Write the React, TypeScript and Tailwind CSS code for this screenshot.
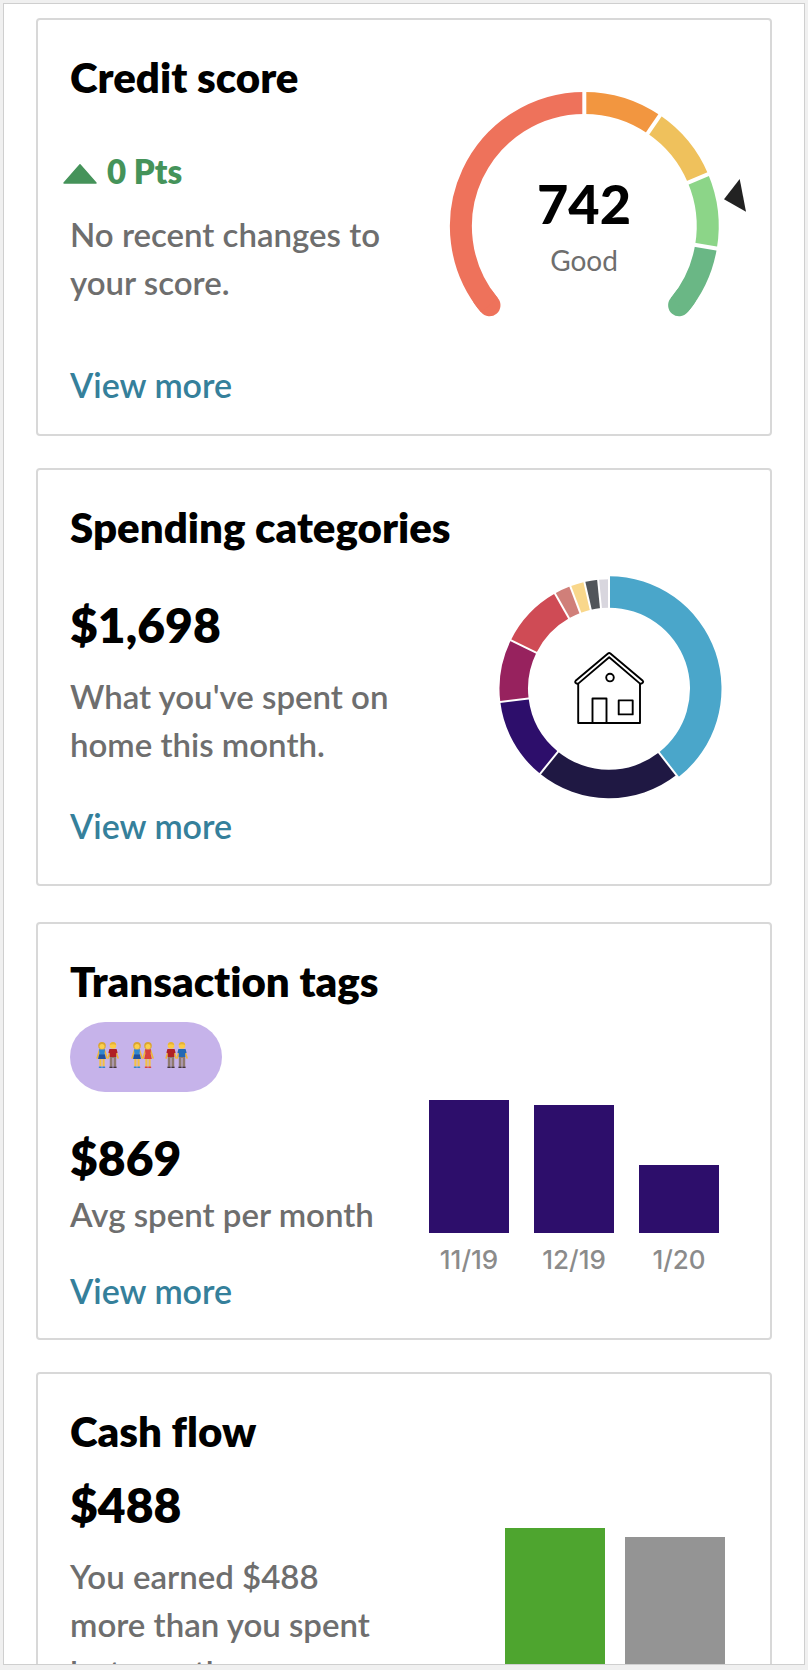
import React from 'react';

type Segment = { from: number; to: number; color: string; outer?: number };

function polar(cx: number, cy: number, r: number, deg: number) {
  const a = (deg * Math.PI) / 180;
  return `${(cx + r * Math.sin(a)).toFixed(2)} ${(cy - r * Math.cos(a)).toFixed(2)}`;
}

function ringPath(cx: number, cy: number, inner: number, outer: number, from: number, to: number) {
  const large = to - from > 180 ? 1 : 0;
  return [
    `M${polar(cx, cy, outer, from)}`,
    `A${outer} ${outer} 0 ${large} 1 ${polar(cx, cy, outer, to)}`,
    `L${polar(cx, cy, inner, to)}`,
    `A${inner} ${inner} 0 ${large} 0 ${polar(cx, cy, inner, from)}Z`,
  ].join('');
}

function arcPath(cx: number, cy: number, r: number, from: number, to: number) {
  const large = to - from > 180 ? 1 : 0;
  return `M${polar(cx, cy, r, from)}A${r} ${r} 0 ${large} 1 ${polar(cx, cy, r, to)}`;
}

const scoreBands: Segment[] = [
  { from: 0, to: 34.3, color: '#f29640' },
  { from: 34.3, to: 67.2, color: '#efc15c' },
  { from: 67.2, to: 99.5, color: '#8cd588' },
];

function ScoreGauge() {
  return (
    <div className="mt-[70px] mr-[50px] grid shrink-0 justify-items-center">
      <svg
        className="h-[228px] w-[272px] overflow-visible [grid-area:1/1]"
        viewBox="0 0 272 228"
        fill="none"
        strokeWidth="22"
        aria-hidden="true"
      >
        <path d={arcPath(136.3, 136.3, 123.4, -129.8, -125)} stroke="#ee725b" strokeLinecap="round" />
        <path d={arcPath(136.3, 136.3, 123.4, -129.8, 0)} stroke="#ee725b" />
        <path d={arcPath(136.3, 136.3, 123.4, 125, 129.8)} stroke="#6ab785" strokeLinecap="round" />
        <path d={arcPath(136.3, 136.3, 123.4, 99.5, 129.8)} stroke="#6ab785" />
        {scoreBands.map((b) => (
          <path key={b.from} d={arcPath(136.3, 136.3, 123.4, b.from, b.to)} stroke={b.color} />
        ))}
        {[0, 34.3, 67.2, 99.5].map((deg) => (
          <path
            key={deg}
            d={`M${polar(136.3, 136.3, 110, deg)}L${polar(136.3, 136.3, 137, deg)}`}
            stroke="#fff"
            strokeWidth="4"
          />
        ))}
        <path d="M291.7 89L276 109.2L298 121.8Z" fill="#222" />
      </svg>
      <div className="flex flex-col items-center pt-[82px] [grid-area:1/1]">
        <span className="text-[54px] leading-[64px] font-black">742</span>
        <span className="mt-[6px] text-[28px] leading-9 text-[#6e6e6e]">Good</span>
      </div>
    </div>
  );
}

const categories: Segment[] = [
  { from: 0, to: 142, color: '#4aa6ca', outer: 112.5 },
  { from: 142, to: 219, color: '#1f1843' },
  { from: 219, to: 263, color: '#2d0e6b' },
  { from: 263, to: 296.3, color: '#97225e' },
  { from: 296.3, to: 330.4, color: '#cf4b55' },
  { from: 330.4, to: 339.3, color: '#d07f79' },
  { from: 339.3, to: 347, color: '#f9d78b' },
  { from: 347, to: 354.3, color: '#51555a' },
  { from: 354.3, to: 360, color: '#d8d6de' },
];

function CategoryDonut() {
  return (
    <svg
      className="mt-[105px] mr-[46px] h-[226px] w-[228px] shrink-0"
      viewBox="0 0 228 226"
      fill="none"
      aria-hidden="true"
    >
      {categories.map((c) => (
        <path
          key={c.from}
          d={ringPath(113, 113.7, 81, c.outer ?? 109.5, c.from, c.to)}
          fill={c.color}
        />
      ))}
      {categories.map((c) => (
        <path
          key={c.from}
          d={`M${polar(113, 113.7, 79, c.from)}L${polar(113, 113.7, 114, c.from)}`}
          stroke="#fff"
          strokeWidth="2"
        />
      ))}
      <g stroke="#000" strokeWidth="1.9" strokeLinejoin="round">
        <path d="M82.2 108.5V148H144V108.5" />
        <path d="M112 78.4Q113.2 77.4 114.4 78.4L146.8 105.8Q147.6 106.6 146.8 107.7Q145.4 109.2 144 108.6L113.2 82.2L82.2 108.6Q80.6 109.2 79.4 107.7Q78.8 106.6 79.6 105.8Z" />
        <circle cx="114" cy="102.6" r="3.8" />
        <path d="M96.5 148V123.5H110.5V148" />
        <rect x="122.7" y="125.4" width="14" height="14" />
      </g>
    </svg>
  );
}

function Person({ x, woman, top }: { x: number; woman?: boolean; top: string }) {
  return (
    <g transform={`translate(${x} 0)`}>
      <path d="M2.6 8L.2 16M7.4 8L10 16" stroke="#eeb63c" strokeWidth="1.7" strokeLinecap="round" />
      {woman ? (
        <>
          <path d="M3.4 16V24.5M6.6 16V24.5" stroke="#f5c142" strokeWidth="2.1" />
          <path d="M2.4 25.2H4.2M5.8 25.2H7.6" stroke={top} strokeWidth="1.4" strokeLinecap="round" />
          <path d="M2 7.2H8L7.6 11.5L8.8 17H1.2L2.4 11.5Z" fill={top} />
          <path d="M2 12.5H8L8.8 17H1.2Z" fill="#1d3f8c" fillOpacity={top === '#d8413c' ? 0 : 0.75} />
          <circle cx="5" cy="3.8" r="3.8" fill="#dba530" />
          <circle cx="5" cy="4.4" r="2.5" fill="#fbd04d" />
        </>
      ) : (
        <>
          <path d="M1.8 13.5H8.2V24.5H5.5V16H4.5V24.5H1.8Z" fill="#8f7a6f" />
          <path d="M2 25.2H4.1M5.9 25.2H8" stroke="#433537" strokeWidth="1.5" strokeLinecap="round" />
          <path d="M1.4 7H8.6L9.6 10.8L8.2 11.2V15H1.8V11.2L.4 10.8Z" fill={top} />
          <circle cx="5" cy="3.5" r="3.3" fill="#fbcb45" />
          <path d="M1.8 3Q2.4 0 5 0Q7.6 0 8.2 3Q5 1.4 1.8 3Z" fill="#e5b137" />
        </>
      )}
    </g>
  );
}

const BLUE = '#2468b4';
const RED = '#b02026';

function TagPill() {
  return (
    <div className="mt-[17px] flex h-[70px] w-[152px] items-start rounded-full bg-[#c6b3ea] pt-5 pl-[27px]">
      <svg
        className="h-[26px] w-[92px] overflow-visible"
        viewBox="0 0 92 26"
        fill="none"
        role="img"
        aria-label="Couples tag"
      >
        <Person x={0} woman top="#2f86cf" />
        <Person x={11} top={RED} />
        <Person x={35} woman top="#2f86cf" />
        <Person x={46} woman top="#d8413c" />
        <Person x={69} top={RED} />
        <Person x={80} top={BLUE} />
      </svg>
    </div>
  );
}

function TagBars() {
  return (
    <div className="mt-[176px] mr-[51px] flex shrink-0 items-end gap-[25px] self-start font-['Inter',sans-serif]">
      <div className="flex w-20 flex-col items-center">
        <div className="h-[133px] w-full bg-[#2d0e6b]" />
        <span className="mt-[11px] text-[26px] leading-8 font-medium text-[#8b8b8b]">11/19</span>
      </div>
      <div className="flex w-20 flex-col items-center">
        <div className="h-32 w-full bg-[#2d0e6b]" />
        <span className="mt-[11px] text-[26px] leading-8 font-medium text-[#8b8b8b]">12/19</span>
      </div>
      <div className="flex w-20 flex-col items-center">
        <div className="h-[68px] w-full bg-[#2d0e6b]" />
        <span className="mt-[11px] text-[26px] leading-8 font-medium text-[#8b8b8b]">1/20</span>
      </div>
    </div>
  );
}

function FlowBars() {
  return (
    <div className="mt-[154px] mr-[45px] flex shrink-0 items-end gap-5 self-start">
      <div className="h-[180px] w-[100px] bg-[#4ea52f]" />
      <div className="h-[171px] w-[100px] bg-[#949494]" />
    </div>
  );
}

function Card({ title, chart, children }: { title: string; chart: React.ReactNode; children: React.ReactNode }) {
  return (
    <section className="flex min-h-[418px] shrink-0 items-start rounded border-2 border-[#d8d8d8] bg-white">
      <div className="flex min-w-0 flex-1 flex-col items-start pt-[33px] pb-5 pl-8">
        <h2 className="text-[42px] leading-12 font-extrabold whitespace-nowrap">{title}</h2>
        {children}
      </div>
      {chart}
    </section>
  );
}

function Amount({ children, className }: { children: React.ReactNode; className: string }) {
  return <p className={`text-5xl leading-14 font-extrabold ${className}`}>{children}</p>;
}

function Note({ children, className }: { children: React.ReactNode; className: string }) {
  return (
    <p className={`max-w-[325px] text-[33px] leading-12 font-semibold text-[#6e6e6e] ${className}`}>{children}</p>
  );
}

function ViewMore({ className }: { className: string }) {
  return (
    <a href="#" className={`text-[34px] leading-12 font-semibold text-[#35809b] ${className}`}>
      View more
    </a>
  );
}

export default function App() {
  return (
    <div className="h-screen bg-[#f0f0f0] p-[3px] pb-[5px] font-['Lato',sans-serif] text-black [font-variant-ligatures:none]">
      <main className="flex h-full flex-col overflow-hidden border border-[#cfcfcf] bg-white px-8 pt-[14px]">
        <Card title="Credit score" chart={<ScoreGauge />}>
          <p className="mt-[46px] -ml-[7px] flex items-center gap-[10px] text-[33px] leading-12 font-extrabold text-[#45935a]">
            <svg className="mt-[5px] h-5 w-[34px]" viewBox="0 0 34 20" aria-hidden="true">
              <path d="M17 .8L33 19H1Z" fill="#45935a" stroke="#45935a" strokeWidth="1.4" strokeLinejoin="round" />
            </svg>
            0 Pts
          </p>
          <Note className="mt-[15px]">No recent changes to your score.</Note>
          <ViewMore className="mt-[55px]" />
        </Card>
        <div className="mt-8 flex flex-col">
          <Card title="Spending categories" chart={<CategoryDonut />}>
            <Amount className="mt-[46px]">$1,698</Amount>
            <Note className="mt-[19px]">What you've spent on home this month.</Note>
            <ViewMore className="mt-[34px]" />
          </Card>
        </div>
        <div className="mt-9 flex flex-col gap-8">
          <Card title="Transaction tags" chart={<TagBars />}>
            <TagPill />
            <Amount className="mt-[38px]">$869</Amount>
            <Note className="mt-1">Avg spent per month</Note>
            <ViewMore className="mt-[29px]" />
          </Card>
          <Card title="Cash flow" chart={<FlowBars />}>
            <Amount className="mt-[22px]">$488</Amount>
            <Note className="mt-[19px]">You earned $488 more than you spent last month.</Note>
          </Card>
        </div>
      </main>
    </div>
  );
}
